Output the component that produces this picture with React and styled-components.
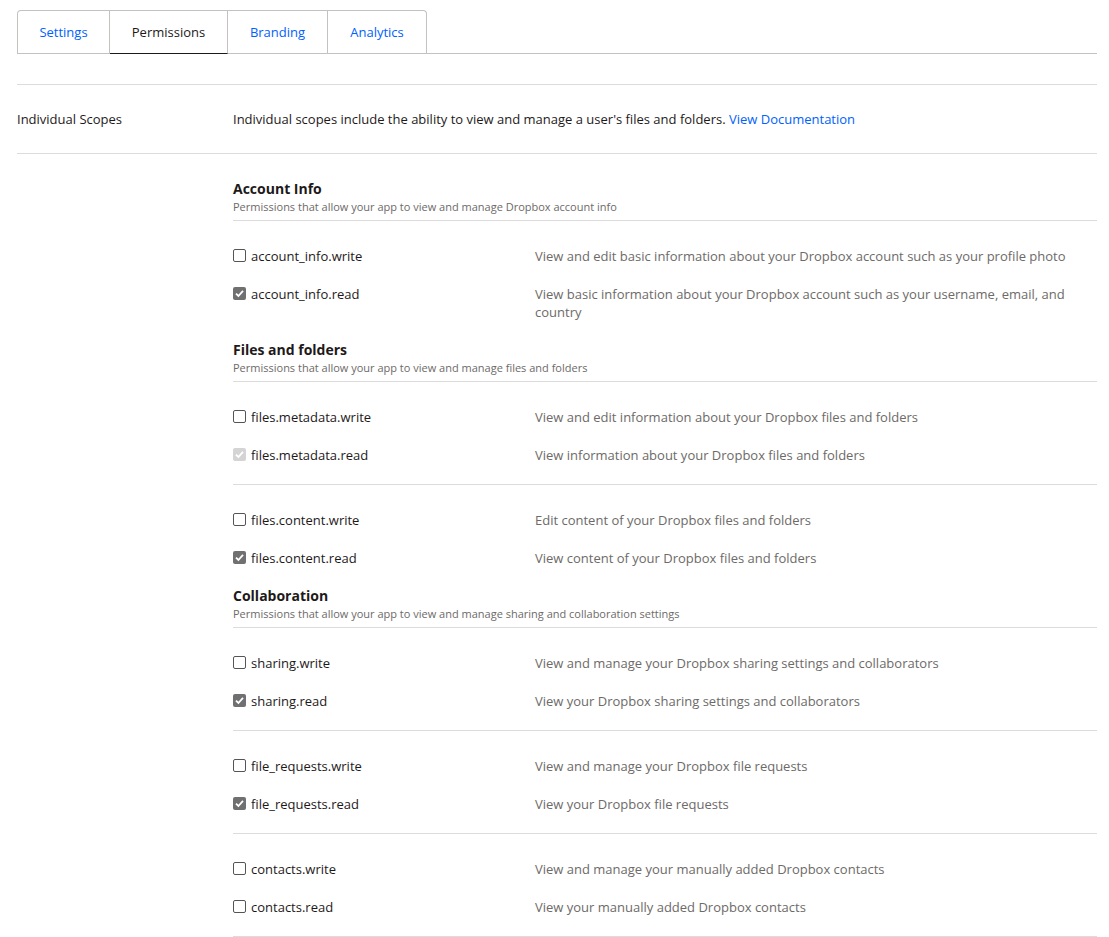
import React from "react";
import styled, { createGlobalStyle } from "styled-components";

const Global = createGlobalStyle`
    body {
        margin: 0;
        background: #fff;
        font-family: "Open Sans", "Noto Sans", sans-serif;
        color: #1e1919;
    }
`;

const Page = styled.div`
    padding: 10px 12px 0 17px;
`;

const Tabs = styled.div`
    display: flex;
    height: 43px;
    border-bottom: 1px solid #c4c2c0;
`;

const Tab = styled.div`
    display: flex;
    align-items: center;
    justify-content: center;
    width: ${(p) => p.w}px;
    box-sizing: border-box;
    font-size: 13px;
    color: ${(p) => (p.active ? "#1e1919" : "#0061fe")};
    border: 1px solid #c4c2c0;
    border-bottom: ${(p) => (p.active ? "1px solid #1e1919" : "none")};
    border-left: ${(p) => (p.first ? "1px solid #c4c2c0" : "none")};
    border-radius: ${(p) => (p.first ? "4px 0 0 0" : p.last ? "0 4px 0 0" : "0")};
    margin-bottom: ${(p) => (p.active ? "-1px" : "0")};
    height: ${(p) => (p.active ? "44px" : "43px")};
`;

const Spacer = styled.div`
    height: 30px;
    border-bottom: 1px solid #dcdcdc;
`;

const ScopeRow = styled.div`
    display: grid;
    grid-template-columns: 216px 1fr;
    padding: 26px 0 25px;
    font-size: 13px;
    line-height: 17px;
    border-bottom: 1px solid #dcdcdc;
`;

const Link = styled.a`
    color: #0061fe;
    text-decoration: none;
`;

const Body = styled.div`
    margin-left: 216px;
    padding: 25px 0 10px;
    border-bottom: 1px solid #dcdcdc;
`;

const SectionHead = styled.div`
    padding-top: ${(p) => (p.first ? "0" : "9px")};
    padding-bottom: 5px;
    border-bottom: 1px solid #dcdcdc;
`;

const Title = styled.div`
    font-size: 14px;
    font-weight: 700;
    line-height: 20px;
`;

const Sub = styled.div`
    font-size: 11px;
    line-height: 16px;
    color: #6d6a68;
`;

const Group = styled.div`
    padding-top: 16px;
    margin-top: ${(p) => (p.divided ? "10px" : "0")};
    border-top: ${(p) => (p.divided ? "1px solid #dcdcdc" : "none")};
`;

const Row = styled.div`
    display: grid;
    grid-template-columns: 302px 1fr;
    padding: 10px 0;
    font-size: 13px;
    line-height: 18px;
`;

const Name = styled.label`
    display: flex;
    align-items: flex-start;
    gap: 5px;
`;

const Box = styled.span`
    flex: none;
    width: 13px;
    height: 13px;
    margin-top: 2px;
    box-sizing: border-box;
    border-radius: 2px;
    border: 1px solid ${(p) => (p.state === "off" ? "#555" : "transparent")};
    background: ${(p) =>
        p.state === "on" ? "#707070" : p.state === "dis" ? "#d4d4d4" : "#fff"};
    display: flex;
`;

const Desc = styled.div`
    color: #6d6a68;
    padding-right: 20px;
`;

const Check = ({ state }) => (
    <Box state={state}>
        {state !== "off" && (
            <svg width="11" height="11" viewBox="0 0 11 11">
                <path d="M2 5.6 L4.4 8 L9 2.8" fill="none" stroke="#fff" strokeWidth="1.8" />
            </svg>
        )}
    </Box>
);

const sections = [
    {
        title: "Account Info",
        sub: "Permissions that allow your app to view and manage Dropbox account info",
        groups: [
            [
                ["account_info.write", "off", "View and edit basic information about your Dropbox account such as your profile photo"],
                ["account_info.read", "on", "View basic information about your Dropbox account such as your username, email, and country"],
            ],
        ],
    },
    {
        title: "Files and folders",
        sub: "Permissions that allow your app to view and manage files and folders",
        groups: [
            [
                ["files.metadata.write", "off", "View and edit information about your Dropbox files and folders"],
                ["files.metadata.read", "dis", "View information about your Dropbox files and folders"],
            ],
            [
                ["files.content.write", "off", "Edit content of your Dropbox files and folders"],
                ["files.content.read", "on", "View content of your Dropbox files and folders"],
            ],
        ],
    },
    {
        title: "Collaboration",
        sub: "Permissions that allow your app to view and manage sharing and collaboration settings",
        groups: [
            [
                ["sharing.write", "off", "View and manage your Dropbox sharing settings and collaborators"],
                ["sharing.read", "on", "View your Dropbox sharing settings and collaborators"],
            ],
            [
                ["file_requests.write", "off", "View and manage your Dropbox file requests"],
                ["file_requests.read", "on", "View your Dropbox file requests"],
            ],
            [
                ["contacts.write", "off", "View and manage your manually added Dropbox contacts"],
                ["contacts.read", "off", "View your manually added Dropbox contacts"],
            ],
        ],
    },
];

const App = () => (
    <Page>
        <Global />
        <Tabs>
            <Tab w={93} first>Settings</Tab>
            <Tab w={118} active>Permissions</Tab>
            <Tab w={100}>Branding</Tab>
            <Tab w={99} last>Analytics</Tab>
        </Tabs>
        <Spacer />
        <ScopeRow>
            <div>Individual Scopes</div>
            <div>
                Individual scopes include the ability to view and manage a user's files and folders.{" "}
                <Link href="#">View Documentation</Link>
            </div>
        </ScopeRow>
        <Body>
            {sections.map((s, si) => (
                <React.Fragment key={s.title}>
                    <SectionHead first={si === 0}>
                        <Title>{s.title}</Title>
                        <Sub>{s.sub}</Sub>
                    </SectionHead>
                    {s.groups.map((g, gi) => (
                        <Group key={gi} divided={gi > 0}>
                            {g.map(([name, state, desc]) => (
                                <Row key={name}>
                                    <Name>
                                        <Check state={state} />
                                        {name}
                                    </Name>
                                    <Desc>{desc}</Desc>
                                </Row>
                            ))}
                        </Group>
                    ))}
                </React.Fragment>
            ))}
        </Body>
    </Page>
);

export default App;
